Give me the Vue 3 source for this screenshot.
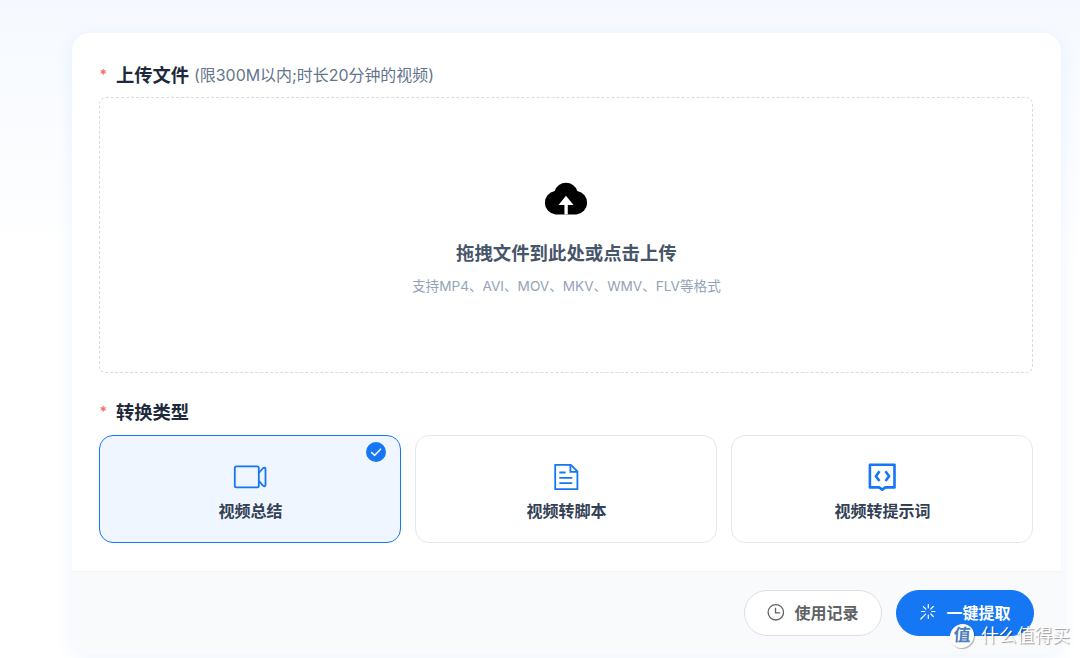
<script setup>
import { ref } from 'vue'

const types = [
  { key: 'summary', label: '视频总结' },
  { key: 'script', label: '视频转脚本' },
  { key: 'prompt', label: '视频转提示词' }
]
const active = ref('summary')
</script>

<template>
  <div class="page">
    <div class="card">
      <div class="card-body">
        <div class="label">
          <span class="star">*</span>
          <span class="label-text">上传文件</span>
          <span class="label-tip">(限300M以内;时长20分钟的视频)</span>
        </div>

        <div class="dropzone">
          <svg class="cloud" width="46" height="35" viewBox="0 0 44 33.5">
            <path d="M12 33A11.3 11.3 0 0 1 11.2 10.6A11.3 11.3 0 0 1 32.8 10.6A11.3 11.3 0 0 1 32 33Z" fill="#000" />
            <path d="M22 15L29.2 24H23.7V33H20.5V24H14.8Z" fill="#fff" />
          </svg>
          <div class="drop-title">拖拽文件到此处或点击上传</div>
          <div class="drop-tip">支持MP4、AVI、MOV、MKV、WMV、FLV等格式</div>
        </div>

        <div class="label second">
          <span class="star">*</span>
          <span class="label-text">转换类型</span>
        </div>

        <div class="types">
          <div
            v-for="item in types"
            :key="item.key"
            class="type"
            :class="{ active: active === item.key }"
            @click="active = item.key"
          >
            <!-- Video -->
            <svg v-if="item.key === 'summary'" class="type-icon" width="34" height="30" viewBox="0 0 34 30" fill="none" stroke="#1677f5" stroke-width="1.8" stroke-linejoin="round">
              <rect x="1.8" y="4.4" width="24" height="21" rx="1.6" />
              <path d="M25.8 11L30.2 6Q32.5 4.8 32.5 6.8V23Q32.5 25 30.2 23.8L25.8 18.8" />
            </svg>
            <!-- Document -->
            <svg v-else-if="item.key === 'script'" class="type-icon" width="34" height="30" viewBox="0 0 34 30" fill="none" stroke="#1677f5" stroke-width="1.8">
              <path d="M6.2 2.9H21.8L28.4 9.4V27.1H6.2Z" />
              <path d="M21.4 3V9.8H28.3M10.3 10.5H16.6M10.3 15.8H23.3M10.3 21.2H23.3" />
            </svg>
            <!-- Code -->
            <svg v-else class="type-icon" width="34" height="30" viewBox="0 0 34 30" fill="none" stroke="#1677f5" stroke-width="2.6" stroke-linejoin="round">
              <path d="M4.9 2.8H29.5V25.4H20.3L17.2 27.6L14.1 25.4H4.9Z" />
              <path d="M14.5 9.3L10.9 14.2L14.5 19.1M20.5 9.3L24.1 14.2L20.5 19.1" />
            </svg>
            <div class="type-name">{{ item.label }}</div>
            <svg v-if="active === item.key" class="check" width="20" height="20" viewBox="0 0 20 20" fill="none">
              <circle cx="10" cy="10" r="10" fill="#1677f5" />
              <path d="M5.6 10.5L8.7 13.3L14.6 7.3" stroke="#fff" stroke-width="1.6" stroke-linecap="round" stroke-linejoin="round" />
            </svg>
          </div>
        </div>
      </div>

      <div class="card-footer">
        <button class="btn">
          <svg width="18" height="18" viewBox="0 0 18 18" fill="none" stroke="#606266" stroke-width="1.3">
            <circle cx="9.8" cy="9.3" r="7.7" />
            <path d="M9.5 4.7V9.8H14.2" />
          </svg>
          <span>使用记录</span>
        </button>
        <button class="btn primary">
          <svg width="18" height="18" viewBox="0 0 18 18" fill="none" stroke="#fff" stroke-width="1.2" stroke-linecap="round">
            <path d="M10.3 1.5V4.8M10.3 12.2V15.5M13.6 8.5H16.9M12.8 6L15.3 3.5M12.8 11L15.3 13.5M7.8 6L5.4 3.6M3.5 8.5H6.7M7.6 11.2L2.8 16" />
          </svg>
          <span>一键提取</span>
        </button>
      </div>
    </div>

    <div class="watermark">
      <span class="wm-logo">值</span>
      <span class="wm-text">什么值得买</span>
    </div>
  </div>
</template>

<style>
body {
  margin: 0;
  overflow: hidden;
}
</style>

<style scoped>
.page {
  position: relative;
  box-sizing: border-box;
  height: 658px;
  padding: 33px 19px 0 72px;
  overflow: hidden;
  background: linear-gradient(180deg, #f5f9ff 0, #fff 260px);
  font-family: Inter, 'Noto Sans CJK SC', sans-serif;
}

.card {
  display: flex;
  flex-direction: column;
  height: 621px;
  border-radius: 18px;
  background: #fff;
  overflow: hidden;
  box-shadow: 0 4px 18px rgba(22, 119, 245, 0.08);
}

.card-body {
  box-sizing: border-box;
  height: 538px;
  padding: 27px 27.6px 0 27.4px;
}

.label {
  display: flex;
  align-items: center;
  height: 28px;
  margin-bottom: 9px;
}

.label.second {
  margin-top: 24px;
  margin-bottom: 10px;
}

.star {
  width: 16.5px;
  color: #f56c6c;
  font-size: 14px;
  font-weight: 600;
}

.label-text {
  color: #1e293b;
  font-size: 18.3px;
  font-weight: 600;
}

.label-tip {
  margin-left: 5px;
  color: #64748b;
  font-size: 15.95px;
}

.dropzone {
  box-sizing: border-box;
  display: flex;
  flex-direction: column;
  align-items: center;
  height: 276px;
  padding-top: 82px;
  border: 1px dashed #d8dbe1;
  border-radius: 7px;
}

.cloud {
  display: block;
}

.drop-title {
  margin-top: 24px;
  color: #475569;
  font-size: 18.4px;
  font-weight: 600;
  line-height: 28px;
}

.drop-tip {
  margin-top: 9px;
  color: #94a3b8;
  font-size: 13.6px;
  line-height: 20px;
}

.types {
  display: grid;
  grid-template-columns: repeat(3, 1fr);
  gap: 14px;
}

.type {
  position: relative;
  box-sizing: border-box;
  display: flex;
  flex-direction: column;
  align-items: center;
  height: 108px;
  padding-top: 26px;
  border: 1px solid #e2e8f0;
  border-radius: 14px;
  cursor: pointer;
}

.type.active {
  border-color: #1677f5;
  background: #eff6ff;
}

.type-name {
  margin-top: 7px;
  color: #334155;
  font-size: 16px;
  font-weight: 600;
  line-height: 24px;
}

.check {
  position: absolute;
  top: 6px;
  right: 14px;
}

.card-footer {
  box-sizing: border-box;
  display: flex;
  flex: 1;
  justify-content: flex-end;
  gap: 14px;
  padding: 18px 27.5px 0;
  border-top: 1px solid #f1f5f9;
  background: #f8fafc;
}

.btn {
  box-sizing: border-box;
  display: flex;
  align-items: center;
  justify-content: center;
  gap: 10px;
  width: 138px;
  height: 46px;
  padding: 0 0 2px;
  border: 1px solid #dcdfe6;
  border-radius: 23px;
  background: #fff;
  color: #606266;
  font-family: inherit;
  font-size: 16px;
  font-weight: 600;
  cursor: pointer;
}

.btn.primary {
  border-color: #1677f5;
  background: #1677f5;
  color: #fff;
}

.watermark {
  position: absolute;
  right: 10px;
  bottom: 9px;
  display: flex;
  align-items: center;
  gap: 7px;
  color: #fff;
  text-shadow: 1px 1px 1px rgba(0, 0, 0, 0.4);
}

.wm-logo {
  width: 24px;
  height: 24px;
  border-radius: 50%;
  background: #fff;
  box-shadow: 1px 1px 1px rgba(0, 0, 0, 0.3);
  color: #4f7fba;
  font-size: 17px;
  font-weight: 600;
  line-height: 23px;
  text-align: center;
  text-shadow: none;
  transform: skewX(-4deg);
}

.wm-text {
  font-size: 17.8px;
  line-height: 26px;
}
</style>
